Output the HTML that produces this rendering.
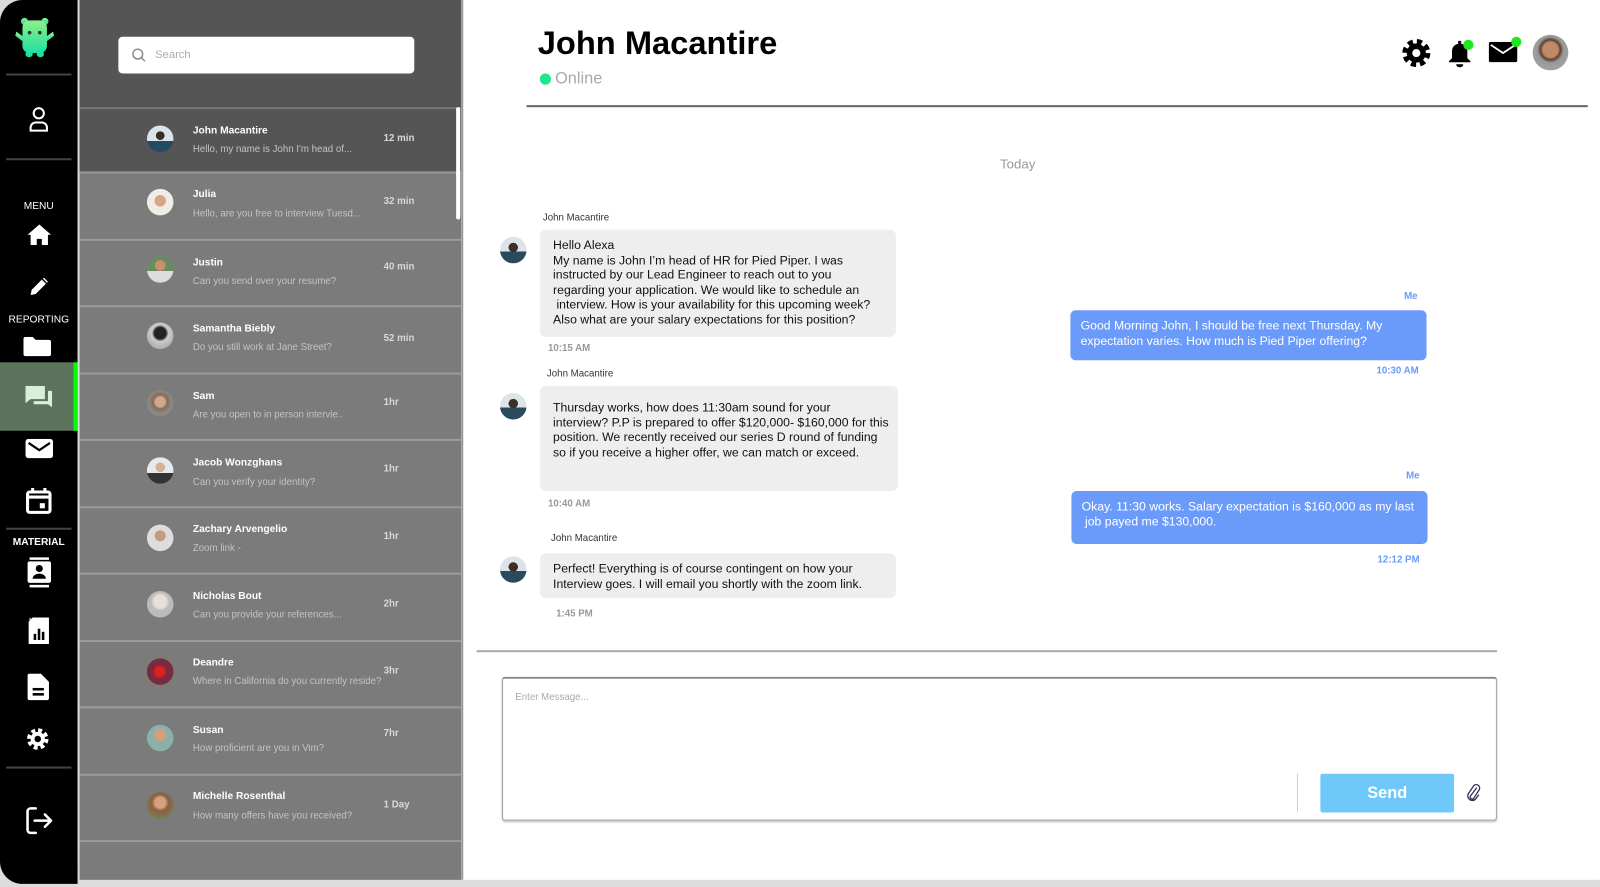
<!DOCTYPE html>
<html><head><meta charset="utf-8"><style>
*{box-sizing:border-box;margin:0;padding:0}
html,body{width:1600px;height:887px;overflow:hidden;background:#dcdcdc;font-family:"Liberation Sans",Arial,sans-serif}
#w{position:absolute;left:0;top:0;width:1568px;height:869px;transform:scale(1.0204,1.0207);transform-origin:0 0;background:#dcdcdc}
.a{position:absolute}
#side{left:0;top:0;width:76px;height:866px;background:#000;border-radius:22px 0 0 22px}
.hr{position:absolute;left:6px;width:64px;height:2px;background:#444}
.lbl{position:absolute;left:0;width:76px;text-align:center;color:#fff;font-size:10px}
#list{left:78px;top:0;width:374px;height:862px;background:#7b7b7b}
.row{position:absolute;left:0;width:374px;height:65px;border-bottom:2px solid #9a9a9a}
.av{position:absolute;left:66px;width:26px;height:26px;border-radius:50%}
.nm{position:absolute;left:111px;color:#fff;font-weight:bold;font-size:10px}
.pv{position:absolute;left:111px;color:#c3c3c3;font-size:9.5px}
.tm{position:absolute;left:298px;color:#d8d8d8;font-weight:bold;font-size:9.5px}
#main{left:452px;top:0;width:1116px;height:862px;background:#fff;border-left:2px solid #999}
.bub{position:absolute;background:#eee;border-radius:6px;font-size:12px;line-height:14.5px;color:#111;padding:8px 13px;white-space:nowrap}
.me{position:absolute;background:#6b9bfa;border-radius:5px;font-size:12px;line-height:14.5px;color:#fff;padding:8px 10px;white-space:nowrap}
.sm{position:absolute;font-size:9.5px;color:#333}
.st{position:absolute;font-size:9.5px;color:#999;font-weight:bold}
.bl{position:absolute;font-size:9.5px;color:#6b9bfa;font-weight:bold}
.cav{position:absolute;width:26px;height:26px;border-radius:50%;background:radial-gradient(circle at 50% 40%,#3a3028 0 22%,transparent 23%),linear-gradient(#dde4e8 0 55%,#2b4a5e 55%)}
</style></head><body><div id="w">
<div id="side" class="a">
 <svg class="a" style="left:14px;top:16px" width="40" height="42" viewBox="0 0 40 42"><defs><linearGradient id="g" x1="0" y1="0" x2="0" y2="1"><stop offset="0" stop-color="#8ef08a"/><stop offset="1" stop-color="#1ee0a0"/></linearGradient></defs><circle cx="10" cy="5" r="3.5" fill="url(#g)"/><circle cx="30" cy="5" r="3.5" fill="url(#g)"/><rect x="8" y="4" width="24" height="32" rx="7" fill="url(#g)"/><path d="M9 20 L2 15 L1 19 L9 25Z M31 20 L38 15 L39 19 L31 25Z" fill="url(#g)"/><circle cx="15" cy="16" r="1.8" fill="#333"/><circle cx="25" cy="16" r="1.8" fill="#333"/><rect x="11" y="34" width="7" height="6" rx="3" fill="#1ee0a0"/><rect x="22" y="34" width="7" height="6" rx="3" fill="#1ee0a0"/></svg>
 <div class="hr" style="top:72px"></div>
 <svg class="a" style="left:28px;top:104px" width="20" height="26" viewBox="0 0 20 26" fill="none" stroke="#fff" stroke-width="2"><circle cx="10" cy="7" r="5"/><path d="M2 24v-3a5 5 0 0 1 5-5h6a5 5 0 0 1 5 5v3z"/></svg>
 <div class="hr" style="top:155px"></div>
 <div class="lbl" style="top:197px">MENU</div>
 <svg class="a" style="left:26px;top:219px" width="25" height="22" viewBox="0 0 25 22" fill="#fff"><path d="M12.5 1 L1 11 h3 v10 h6 v-6 h5 v6 h6 V11 h3Z"/></svg>
 <svg class="a" style="left:29px;top:272px" width="18" height="18" viewBox="0 0 18 18" fill="#fff"><path d="M1 17 L2 12 L12 2 L16 6 L6 16Z M13 1 L14 0 L18 4 L17 5Z"/></svg>
 <div class="lbl" style="top:308px">REPORTING</div>
 <svg class="a" style="left:23px;top:330px" width="27" height="19" viewBox="0 0 27 19" fill="#fff"><path d="M0 2a2 2 0 0 1 2-2h7l3 3h13a2 2 0 0 1 2 2v12a2 2 0 0 1-2 2H2a2 2 0 0 1-2-2z"/></svg>
 <div class="a" style="left:0;top:355px;width:76px;height:67px;background:#5c735c"></div>
 <div class="a" style="left:72px;top:355px;width:4px;height:67px;background:#0f0"></div>
 <svg class="a" style="left:25px;top:378px" width="28" height="24" viewBox="0 0 28 24" fill="#d8f0d8"><path d="M0 0h19v13H5l-5 4z"/><path d="M22 5h4v16l-4-3H8v-3h14z"/></svg>
 <svg class="a" style="left:25px;top:430px" width="27" height="19" viewBox="0 0 27 19"><rect width="27" height="19" rx="3" fill="#fff"/><path d="M3 4 L13.5 11 L24 4" fill="none" stroke="#000" stroke-width="2.2"/></svg>
 <svg class="a" style="left:25px;top:478px" width="26" height="26" viewBox="0 0 26 26" fill="none" stroke="#fff" stroke-width="3"><rect x="2" y="4" width="22" height="20" rx="2"/><path d="M2 9h22M7 0v5M19 0v5"/><rect x="14" y="15" width="5" height="5" fill="#fff" stroke="none"/></svg>
 <div class="hr" style="top:517px"></div>
 <div class="lbl" style="top:526px;font-weight:bold">MATERIAL</div>
 <svg class="a" style="left:27px;top:546px" width="23" height="30" viewBox="0 0 23 30" fill="#fff"><rect x="2" y="0" width="19" height="2.5"/><rect x="2" y="27" width="19" height="2.5"/><rect x="0" y="4" width="23" height="21" rx="2"/><circle cx="11.5" cy="11" r="3.5" fill="#000"/><path d="M5 21a6.5 5 0 0 1 13 0z" fill="#000"/></svg>
 <svg class="a" style="left:28px;top:605px" width="20" height="26" viewBox="0 0 20 26" fill="#fff"><path d="M4 0h16v26H0V4z"/><path d="M0 2L2 0v2z"/><rect x="5" y="16" width="2.5" height="6" fill="#000"/><rect x="9" y="11" width="2.5" height="11" fill="#000"/><rect x="13" y="14" width="2.5" height="8" fill="#000"/></svg>
 <svg class="a" style="left:27px;top:660px" width="21" height="26" viewBox="0 0 21 26" fill="#fff"><path d="M2 0h11l8 8v16a2 2 0 0 1-2 2H2a2 2 0 0 1-2-2V2a2 2 0 0 1 2-2z"/><rect x="5" y="14" width="11" height="2.5" fill="#000"/><rect x="5" y="19" width="11" height="2.5" fill="#000"/></svg>
 <svg class="a" style="left:25px;top:712px" width="24" height="24" viewBox="0 0 24 24"><circle cx="12" cy="12" r="8" fill="none" stroke="#fff" stroke-width="5" stroke-dasharray="3.6 2.7"/><circle cx="12" cy="12" r="7" fill="#fff"/><circle cx="12" cy="12" r="3.2" fill="#000"/></svg>
 <div class="hr" style="top:751px"></div>
 <svg class="a" style="left:25px;top:790px" width="27" height="28" viewBox="0 0 27 28" fill="none" stroke="#fff" stroke-width="2.5" stroke-linecap="round" stroke-linejoin="round"><path d="M10 2H5a3 3 0 0 0-3 3v18a3 3 0 0 0 3 3h5"/><path d="M9 14h16M19 8l6 6-6 6"/></svg>
</div>
<div id="list" class="a">
 <div class="a" style="left:0;top:0;width:374px;height:105px;background:#555"></div>
 <div class="a" style="left:38px;top:36px;width:290px;height:36px;background:#fff;border-radius:4px"></div>
 <svg class="a" style="left:51px;top:47px" width="14" height="14" viewBox="0 0 14 14" fill="none" stroke="#888" stroke-width="1.4"><circle cx="6" cy="6" r="4.8"/><path d="M9.5 9.5L13 13"/></svg>
 <div class="a" style="left:74px;top:48px;font-size:11px;color:#aaa">Search</div>
 <div class="row" style="top:105px;background:#555;border-top:2px solid #777"><div class="av" style="top:16px;background:radial-gradient(circle at 50% 38%,#3a2c22 0 20%,transparent 21%),linear-gradient(#d8e4ea 0 58%,#234c63 58%)"></div><div class="nm" style="top:16px">John Macantire</div><div class="pv" style="top:34px">Hello, my name is John I'm head of...</div><div class="tm" style="top:23px">12 min</div></div>
 <div class="row" style="top:170px;height:66px"><div class="av" style="top:15px;background:radial-gradient(circle at 50% 45%,#d8a58a 0 28%,#f0ece6 30%)"></div><div class="nm" style="top:15px">Julia</div><div class="pv" style="top:34px">Hello, are you free to interview Tuesd...</div><div class="tm" style="top:22px">32 min</div></div>
 <div class="row" style="top:236px"><div class="av" style="top:15px;background:radial-gradient(circle at 50% 35%,#c89070 0 24%,transparent 25%),linear-gradient(#6a8a60 0 55%,#ddd 55%)"></div><div class="nm" style="top:16px">Justin</div><div class="pv" style="top:34px">Can you send over your resume?</div><div class="tm" style="top:20px">40 min</div></div>
 <div class="row" style="top:301px;height:66px"><div class="av" style="top:15px;background:radial-gradient(circle at 50% 40%,#222 0 28%,#ccc 40%,#999)"></div><div class="nm" style="top:16px">Samantha Biebly</div><div class="pv" style="top:34px">Do you still work at Jane Street?</div><div class="tm" style="top:25px">52 min</div></div>
 <div class="row" style="top:367px"><div class="av" style="top:15px;background:radial-gradient(circle at 50% 45%,#d0a890 0 25%,#8a6a55 35%,#888 60%)"></div><div class="nm" style="top:16px">Sam</div><div class="pv" style="top:34px">Are you open to in person intervie..</div><div class="tm" style="top:22px">1hr</div></div>
 <div class="row" style="top:432px;height:66px"><div class="av" style="top:16px;background:radial-gradient(circle at 50% 38%,#d8b098 0 22%,transparent 23%),linear-gradient(#e6eaee 0 60%,#333 60%)"></div><div class="nm" style="top:16px">Jacob Wonzghans</div><div class="pv" style="top:35px">Can you verify your identity?</div><div class="tm" style="top:22px">1hr</div></div>
 <div class="row" style="top:498px"><div class="av" style="top:16px;background:radial-gradient(circle at 50% 42%,#c89a80 0 26%,#ddd 28%)"></div><div class="nm" style="top:15px">Zachary Arvengelio</div><div class="pv" style="top:34px">Zoom link -</div><div class="tm" style="top:22px">1hr</div></div>
 <div class="row" style="top:563px;height:66px"><div class="av" style="top:16px;background:radial-gradient(circle at 50% 40%,#e8e0d8 0 30%,#bbb 45%)"></div><div class="nm" style="top:16px">Nicholas Bout</div><div class="pv" style="top:34px">Can you provide your references...</div><div class="tm" style="top:23px">2hr</div></div>
 <div class="row" style="top:629px"><div class="av" style="top:16px;background:radial-gradient(circle at 48% 50%,#e02020 0 25%,#7a2a3a 35%)"></div><div class="nm" style="top:15px">Deandre</div><div class="pv" style="top:33px">Where in California do you currently reside?</div><div class="tm" style="top:23px">3hr</div></div>
 <div class="row" style="top:694px;height:66px"><div class="av" style="top:16px;background:radial-gradient(circle at 50% 40%,#d0a080 0 25%,#8ab0a8 35%)"></div><div class="nm" style="top:16px">Susan</div><div class="pv" style="top:34px">How proficient are you in Vim?</div><div class="tm" style="top:19px">7hr</div></div>
 <div class="row" style="top:760px"><div class="av" style="top:16px;background:radial-gradient(circle at 50% 40%,#d8a080 0 25%,#8a6040 40%,#7a8a60)"></div><div class="nm" style="top:15px">Michelle Rosenthal</div><div class="pv" style="top:34px">How many offers have you received?</div><div class="tm" style="top:23px">1 Day</div></div>
 <div class="a" style="left:369px;top:105px;width:4px;height:110px;background:#fff;border-radius:2px"></div>
</div>
<div id="main" class="a">
 <div class="a" style="left:73px;top:24px;font-size:32px;font-weight:bold;color:#000">John Macantire</div>
 <div class="a" style="left:75px;top:72px;width:11px;height:11px;border-radius:50%;background:#1ee88a"></div>
 <div class="a" style="left:90px;top:69px;font-size:16px;color:#aaa">Online</div>
 <svg class="a" style="left:918px;top:37px" width="32" height="30" viewBox="0 0 24 24"><circle cx="12" cy="12" r="8.5" fill="none" stroke="#000" stroke-width="5" stroke-dasharray="3.8 2.9"/><circle cx="12" cy="12" r="7.5" fill="#000"/><circle cx="12" cy="12" r="3.2" fill="#fff"/></svg>
 <svg class="a" style="left:964px;top:38px" width="26" height="28" viewBox="0 0 26 28" fill="#000"><path d="M11 2h3v3a7 7 0 0 1 6 7v7l3 3v1H2v-1l3-3v-7a7 7 0 0 1 6-7z"/><path d="M9 25h7a3.5 3 0 0 1-7 0z"/></svg>
 <div class="a" style="left:980px;top:39px;width:10px;height:10px;border-radius:50%;background:#1ee81e"></div>
 <svg class="a" style="left:1005px;top:41px" width="28" height="20" viewBox="0 0 28 20"><rect width="28" height="20" rx="2" fill="#000"/><path d="M2 3l12 8 12-8" fill="none" stroke="#fff" stroke-width="1.8"/></svg>
 <div class="a" style="left:1027px;top:36px;width:10px;height:10px;border-radius:50%;background:#1ee81e"></div>
 <div class="a" style="left:1048px;top:34px;width:35px;height:35px;border-radius:50%;background:radial-gradient(circle at 50% 42%,#c08a6a 0 28%,#5a4030 36%,#999 48%,#aaa)"></div>
 <div class="a" style="left:62px;top:103px;width:1040px;height:2px;background:#666"></div>
 <div class="a" style="left:526px;top:153px;font-size:13px;color:#999">Today</div>

 <div class="sm" style="left:78px;top:208px">John Macantire</div>
 <div class="cav" style="left:36px;top:232px"></div>
 <div class="bub" style="left:75px;top:225px;width:349px;height:105px">Hello Alexa<br>My name is John I’m head of HR for Pied Piper. I was<br>instructed by our Lead Engineer to reach out to you<br>regarding your application. We would like to schedule an<br>&nbsp;interview. How is your availability for this upcoming week?<br>Also what are your salary expectations for this position?</div>
 <div class="st" style="left:83px;top:336px">10:15 AM</div>
 <div class="sm" style="left:82px;top:361px">John Macantire</div>
 <div class="cav" style="left:36px;top:385px"></div>
 <div class="bub" style="left:75px;top:378px;width:351px;height:103px;padding-top:14px">Thursday works, how does 11:30am sound for your<br>interview? P.P is prepared to offer $120,000- $160,000 for this<br>position. We recently received our series D round of funding<br>so if you receive a higher offer, we can match or exceed.</div>
 <div class="st" style="left:83px;top:488px">10:40 AM</div>
 <div class="sm" style="left:86px;top:522px">John Macantire</div>
 <div class="cav" style="left:36px;top:545px"></div>
 <div class="bub" style="left:75px;top:542px;width:349px;height:44px">Perfect! Everything is of course contingent on how your<br>Interview goes. I will email you shortly with the zoom link.</div>
 <div class="st" style="left:91px;top:596px">1:45 PM</div>

 <div class="bl" style="left:922px;top:285px">Me</div>
 <div class="me" style="left:595px;top:304px;width:349px;height:49px">Good Morning John, I should be free next Thursday. My<br>expectation varies. How much is Pied Piper offering?</div>
 <div class="bl" style="left:895px;top:358px">10:30 AM</div>
 <div class="bl" style="left:924px;top:461px">Me</div>
 <div class="me" style="left:596px;top:481px;width:349px;height:52px">Okay. 11:30 works. Salary expectation is $160,000 as my last<br>&nbsp;job payed me $130,000.</div>
 <div class="bl" style="left:896px;top:543px">12:12 PM</div>

 <div class="a" style="left:13px;top:637px;width:1000px;height:2px;background:#aaa"></div>
 <div class="a" style="left:38px;top:663px;width:975px;height:141px;border:1.5px solid #999;border-top:2px solid #888;border-radius:3px;box-shadow:0 1px 2px #bbb"></div>
 <div class="a" style="left:51px;top:678px;font-size:9.5px;color:#aaa">Enter Message...</div>
 <div class="a" style="left:817px;top:758px;width:1px;height:38px;background:#ccc"></div>
 <div class="a" style="left:840px;top:758px;width:131px;height:38px;background:#6ec8fa;border-radius:2px;color:#fff;font-size:16px;font-weight:bold;text-align:center;line-height:40px">Send</div>
 <svg class="a" style="left:983px;top:768px" width="14" height="18" viewBox="0 0 14 18" fill="none" stroke="#335" stroke-width="1.3" stroke-linecap="round"><path d="M10 4L4 12a2 2 0 0 0 3 2.5L12.5 6a3.4 3.4 0 0 0-5-4.5L2 9.5a4.5 4.5 0 0 0 7 5.5l3-4"/></svg>
</div>
</div></body></html>
